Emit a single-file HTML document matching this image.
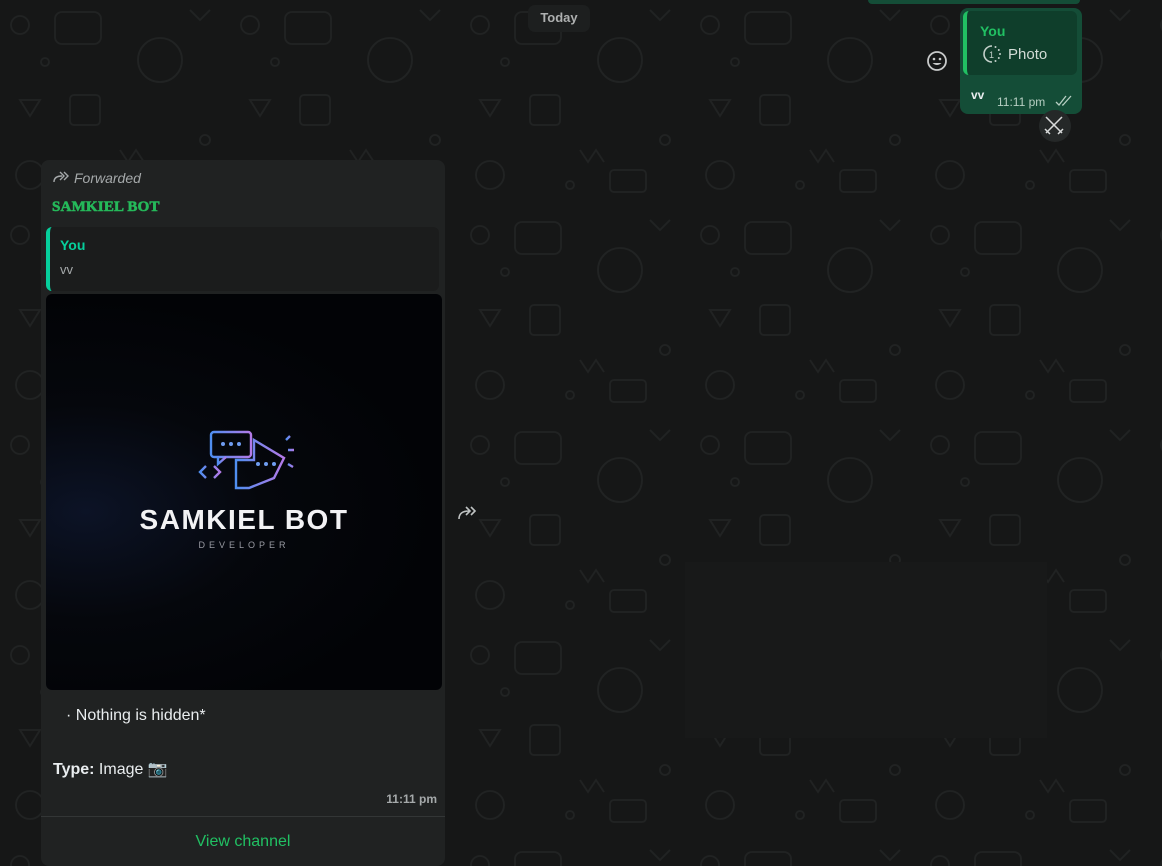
<!DOCTYPE html>
<html><head><meta charset="utf-8">
<style>
*{box-sizing:border-box;margin:0;padding:0}
body{width:1162px;height:866px;overflow:hidden;background:#161717;font-family:"Liberation Sans",sans-serif;position:relative}
.bg{position:absolute;inset:0}
.today{position:absolute;left:528px;top:5px;width:62px;height:27px;background:#1d1f1f;border-radius:7px;color:#aeb0b0;font-size:13px;font-weight:bold;text-align:center;line-height:26px}
.sent{position:absolute;left:960px;top:8px;width:122px;height:106px;background:#144d37;border-radius:8px}
.sentq{position:absolute;left:3px;top:3px;width:114px;height:64px;background:#0f3e2b;border-radius:6px;border-left:4px solid #21c063}
.card{position:absolute;left:41px;top:160px;width:404px;height:706px;background:#202222;border-radius:8px}
.quote{position:absolute;left:5px;top:67px;width:393px;height:64px;background:#1b1c1c;border-radius:6px;border-left:4px solid #06cf9c}
.img{position:absolute;left:5px;top:134px;width:396px;height:396px;background:radial-gradient(ellipse at 10% 55%,#0c1326 0%,#05070c 35%,#020306 70%);border-radius:6px}
.blur{position:absolute;left:685px;top:562px;width:362px;height:176px;background:#181919}
</style></head><body>
<svg class="bg" width="1162" height="866">
<defs><pattern id="p" width="230" height="210" patternUnits="userSpaceOnUse">
<g fill="none" stroke="#212323" stroke-width="1.8">
<circle cx="20" cy="25" r="9"/><rect x="55" y="12" width="46" height="32" rx="7"/><circle cx="160" cy="60" r="22"/><path d="M20 100l10 16 10-16z"/><rect x="70" y="95" width="30" height="30" rx="4"/><circle cx="205" cy="140" r="5"/><circle cx="45" cy="62" r="4"/><path d="M120 150l8 12 8-12 8 12"/><rect x="150" y="170" width="36" height="22" rx="4"/><circle cx="30" cy="175" r="14"/><path d="M190 10l10 10 10-10"/><circle cx="110" cy="185" r="4"/></g></pattern></defs>
<rect width="1162" height="866" fill="url(#p)"/>
</svg>
<div class="blur"></div>
<div class="today">Today</div>
<div style="position:absolute;left:868px;top:0;width:212px;height:4px;background:#144d37;border-radius:0 0 6px 6px"></div>

<svg style="position:absolute;left:926px;top:50px" width="22" height="22" viewBox="0 0 22 22"><circle cx="11" cy="11" r="9" fill="none" stroke="#c8caca" stroke-width="1.8"/><circle cx="8" cy="9" r="1.3" fill="#c8caca"/><circle cx="14" cy="9" r="1.3" fill="#c8caca"/><path d="M6.5 13q4.5 4 9 0" fill="#c8caca"/></svg>

<div class="sent">
 <div class="sentq">
  <div style="position:absolute;left:13px;top:12px;color:#21c063;font-size:14px;font-weight:bold">You</div>
  <svg style="position:absolute;left:15px;top:33px" width="20" height="20" viewBox="0 0 20 20"><path d="M10 2a8 8 0 1 0 0 16" fill="none" stroke="#c3d0ca" stroke-width="1.6"/><g fill="#c3d0ca"><circle cx="13.5" cy="3" r="1"/><circle cx="16.8" cy="6" r="1"/><circle cx="18" cy="10" r="1"/><circle cx="16.8" cy="14" r="1"/><circle cx="13.5" cy="17" r="1"/></g><text x="7" y="14" fill="#c3d0ca" font-size="9" font-family="Liberation Sans">1</text></svg>
  <div style="position:absolute;left:41px;top:35px;color:#d2dcd6;font-size:15px">Photo</div>
 </div>
 <div style="position:absolute;left:11px;top:80px;color:#e9edef;font-size:12px;font-weight:bold">vv</div>
 <div style="position:absolute;left:37px;top:87px;color:#b7cfc3;font-size:12px">11:11 pm</div>
 <svg style="position:absolute;left:95px;top:87px" width="18" height="12" viewBox="0 0 18 12"><path d="M1 7l3 3 7-9M7 10l1 0 8-9" fill="none" stroke="#b7cfc3" stroke-width="1.3"/></svg>
</div>
<div style="position:absolute;left:1039px;top:110px;width:32px;height:32px;border-radius:50%;background:#252828"></div>
<svg style="position:absolute;left:1043px;top:114px" width="22" height="22" viewBox="0 0 22 22"><path d="M3 3l16 16M19 3L3 19M2 15l5 5M20 15l-5 5" stroke="#d8dada" stroke-width="1.5"/></svg>

<svg style="position:absolute;left:457px;top:505px" width="22" height="16" viewBox="0 0 22 16"><path d="M2 14q0-8 10-8M9 2l4 4-4 4M14 2l4 4-4 4" fill="none" stroke="#bfc3c3" stroke-width="1.6"/></svg>

<div class="card">
 <svg style="position:absolute;left:12px;top:10px" width="18" height="14" viewBox="0 0 18 14"><path d="M1 12q0-6 8-6M7 2l4 4-4 4M11 2l4 4-4 4" fill="none" stroke="#a5a9aa" stroke-width="1.4"/></svg>
 <div style="position:absolute;left:33px;top:10px;color:#a5a9aa;font-size:14px;font-style:italic">Forwarded</div>
 <div style="position:absolute;left:11px;top:39px;color:#25b95a;font-size:15px;font-weight:bold;font-family:'Liberation Serif',serif;letter-spacing:0.2px;-webkit-text-stroke:0.6px #25b95a">SAMKIEL BOT</div>
 <div class="quote">
  <div style="position:absolute;left:10px;top:10px;color:#06cf9c;font-size:14px;font-weight:bold">You</div>
  <div style="position:absolute;left:10px;top:35px;color:#a5a9aa;font-size:13px">vv</div>
 </div>
 <div class="img">
  <svg style="position:absolute;left:150px;top:136px" width="100" height="70" viewBox="0 0 100 70">
   <defs><linearGradient id="g" x1="0" x2="1"><stop offset="0" stop-color="#4f8ef0"/><stop offset="1" stop-color="#b37ae8"/></linearGradient></defs>
   <g fill="none" stroke="url(#g)" stroke-width="2.4">
   <rect x="15" y="2" width="40" height="25" rx="3"/><path d="M22 27l0 7 8-7"/>
   <path d="M58 10l30 18-10 20-25 10H40V30h18z"/><path d="M48 48h12"/>
   <path d="M10 36l-6 6 6 6M18 36l6 6-6 6"/><path d="M90 10l4-4M92 34l5 3M92 20l6 0"/></g>
   <g fill="#6f9cf0"><circle cx="27" cy="14" r="2"/><circle cx="35" cy="14" r="2"/><circle cx="43" cy="14" r="2"/><circle cx="62" cy="34" r="2"/><circle cx="70" cy="34" r="2"/><circle cx="78" cy="34" r="2"/></g>
  </svg>
  <div style="position:absolute;left:0;width:396px;top:210px;text-align:center;color:#f2f2f4;font-size:28px;font-weight:bold;letter-spacing:1.5px">SAMKIEL BOT</div>
  <div style="position:absolute;left:0;width:396px;top:246px;text-align:center;color:#9a9ca4;font-size:9px;letter-spacing:4px">DEVELOPER</div>
 </div>
 <div style="position:absolute;left:25px;top:547px;color:#e9edef;font-size:16px">· Nothing is hidden*</div>
 <div style="position:absolute;left:12px;top:599px;color:#e9edef;font-size:16px"><b>Type:</b> Image 📷</div>
 <div style="position:absolute;right:8px;top:632px;color:#a5a9aa;font-size:12px;font-weight:bold">11:11 pm</div>
 <div style="position:absolute;left:0;top:656px;width:404px;height:1px;background:#333636"></div>
 <div style="position:absolute;left:0;width:404px;top:673px;text-align:center;color:#21c063;font-size:16px">View channel</div>
</div>
</body></html>
